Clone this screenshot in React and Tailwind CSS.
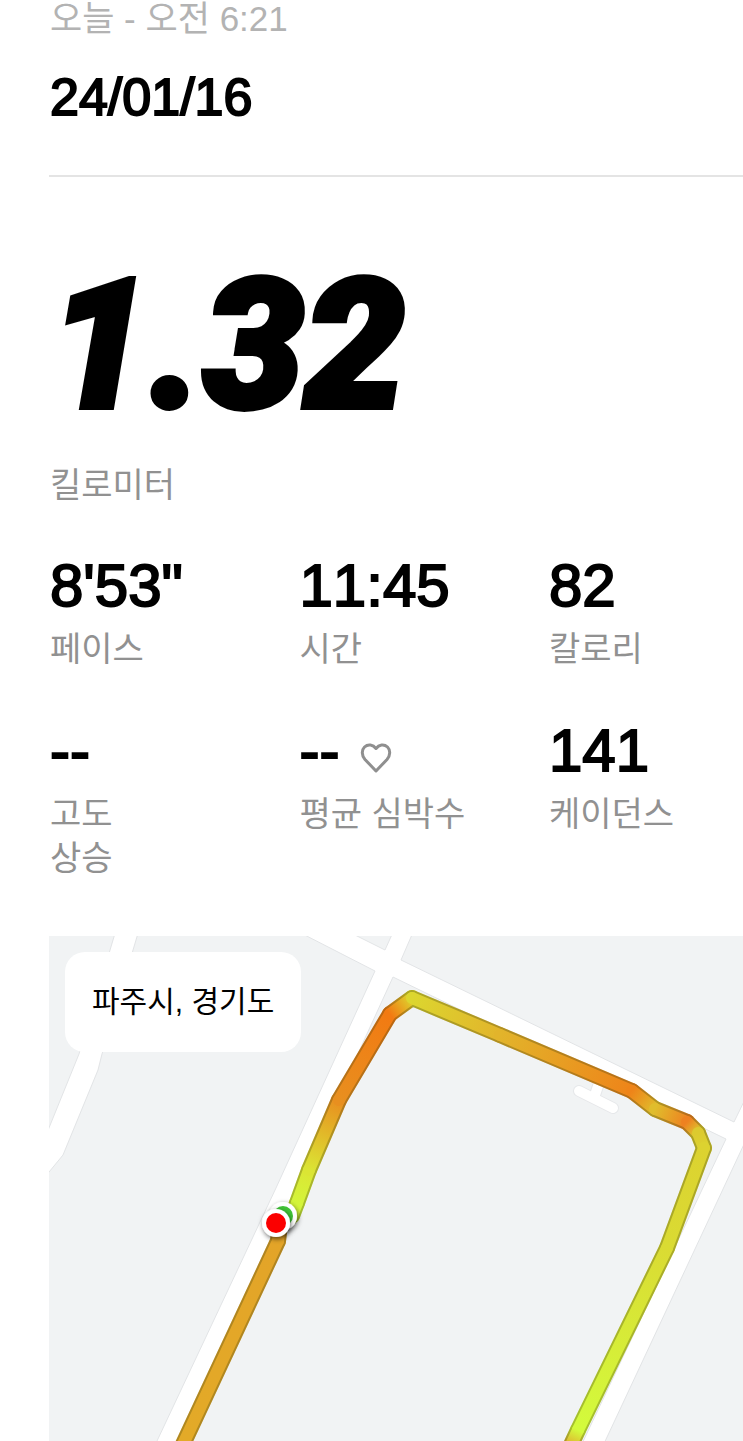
const LABEL = "text-[34px] leading-[44px]";
const FIGURE =
  "text-[60px] leading-[60px] text-black [font-kerning:none] [-webkit-text-stroke:2px_black]";

const route = [
  [292, 1216, "#cdf53c"],
  [297, 1203, "#d4f53a"],
  [309, 1170, "#dbe534"],
  [339, 1100, "#e88f1f"],
  [390, 1014, "#f27a12"],
  [412, 998, "#dcd62f"],
  [500, 1035, "#e2b42b"],
  [632, 1091, "#ee8419"],
  [655, 1109, "#e0bd2c"],
  [687, 1122, "#ee8120"],
  [698, 1133, "#dcca2f"],
  [704, 1148, "#dcd230"],
  [667, 1248, "#dadb33"],
  [578, 1430, "#d3fb3c"],
  [571, 1445, "#dfb52f"],
];

const tail = [
  [280, 1224, "#b97f1c"],
  [278, 1241, "#e3a428"],
  [171, 1470, "#e3ab28"],
];

const toPoints = (list) => list.map(([x, y]) => `${x},${y}`).join(" ");

function Track({ id, points }) {
  const segments = points.slice(1).map((end, i) => [points[i], end]);
  const lines = (width) =>
    segments.map(([a, b], i) => (
      <line
        key={i}
        x1={a[0]}
        y1={a[1]}
        x2={b[0]}
        y2={b[1]}
        stroke={`url(#${id}-${i})`}
        strokeWidth={width}
        strokeLinecap="round"
      />
    ));
  return (
    <g>
      <defs>
        {segments.map(([a, b], i) => (
          <linearGradient
            key={i}
            id={`${id}-${i}`}
            gradientUnits="userSpaceOnUse"
            x1={a[0]}
            y1={a[1]}
            x2={b[0]}
            y2={b[1]}
          >
            <stop offset="0" stopColor={a[2]} />
            <stop offset="1" stopColor={b[2]} />
          </linearGradient>
        ))}
      </defs>
      {lines(16)}
      <polyline
        points={toPoints(points)}
        fill="none"
        stroke="#3c3c10"
        strokeOpacity="0.3"
        strokeWidth="16"
        strokeLinejoin="round"
        strokeLinecap="round"
      />
      {lines(12)}
    </g>
  );
}

function RouteMap() {
  return (
    <svg
      viewBox="49 936 694 505"
      className="block w-full bg-[#f1f3f4]"
      role="img"
      aria-label="러닝 경로 지도"
    >
      <defs>
        <filter id="pin" x="-50%" y="-50%" width="200%" height="200%">
          <feDropShadow dx="1" dy="2" stdDeviation="2.5" floodColor="#000" floodOpacity="0.6" />
        </filter>
      </defs>
      <g fill="#fff" stroke="#e2e4e6" strokeWidth="1">
        <path d="M116 930 L79 1054 L40 1150 V1183 L63 1155 L98 1070 L102 1054 L139 930Z" />
        <path d="M295 930 L375 971 L276 1188 L157 1441 L150 1460 H172 L393 977 L726 1139 L579 1450 H601 L760 1110 V1085 H752 L734 1122 L401 960 L414 930 H394 L385 950 L345 930Z" />
      </g>
      <g fill="none" strokeLinecap="round">
        <path d="M579 1091 L613 1108 M600 1080 L594 1098" stroke="#e6e8ea" strokeWidth="12" />
        <path d="M579 1091 L613 1108 M600 1080 L594 1098" stroke="#fff" strokeWidth="10" />
      </g>
      <Track id="tail" points={tail} />
      <Track id="route" points={route} />
      <g filter="url(#pin)">
        <circle cx="283" cy="1216" r="14" fill="#fff" />
      </g>
      <circle cx="283" cy="1216" r="10" fill="#3fc236" />
      <g filter="url(#pin)">
        <circle cx="276" cy="1223" r="14" fill="#fff" />
      </g>
      <circle cx="276" cy="1223" r="10" fill="#fb0000" />
    </svg>
  );
}

function Heart() {
  return (
    <svg viewBox="0 0 34 34" className="mb-[6px] ml-5 size-[34px]" fill="none" aria-hidden="true">
      <path
        d="M17 30 L6 18.500 C2.500 14.500 2.500 9 5.500 6 C9 2.800 14 3.500 17 7.500 C20 3.500 25 2.800 28.500 6 C31.500 9 31.500 14.500 28 18.500 Z"
        stroke="#8f8f8f"
        strokeWidth="3"
        strokeLinejoin="round"
      />
    </svg>
  );
}

function Stat({ value, icon, children }) {
  return (
    <div className="flex flex-col-reverse justify-end gap-[11px]">
      <dt className={`${LABEL} text-[#919191]`}>{children}</dt>
      <dd className={`${FIGURE} flex items-end`}>
        {value}
        {icon}
      </dd>
    </div>
  );
}

export default function App() {
  return (
    <main className="overflow-hidden bg-white pl-[49px] font-['Liberation_Sans','Noto_Sans_CJK_KR',sans-serif]">
      <header className="border-b-2 border-[#e4e4e4] pb-[52px] pl-px">
        <p className="text-[35px] leading-[38px] text-[#b3b3b3]">오늘 - 오전 6:21</p>
        <h1 className="mt-[33px] text-[52px] leading-[52px] font-normal text-black [font-kerning:none] [-webkit-text-stroke:2px_black]">
          24/01/16
        </h1>
      </header>

      <section className="mt-[79px]">
        <p className="font-['Roboto',sans-serif] text-[180px] leading-[180px] font-black text-black italic [-webkit-text-stroke:6px_black]">
          1.32
        </p>
        <p className={`${LABEL} mt-[27px] pl-px text-[#919191]`}>킬로미터</p>
      </section>

      <dl className="mt-[49px] grid grid-cols-[36%_36%_28%] gap-y-[50px] pl-px">
        <Stat value={"8'53\""}>페이스</Stat>
        <Stat value="11:45">시간</Stat>
        <Stat value="82">칼로리</Stat>
        <Stat value="--">
          고도
          <br />
          상승
        </Stat>
        <Stat value="--" icon={<Heart />}>
          평균 심박수
        </Stat>
        <Stat value="141">케이던스</Stat>
      </dl>

      <section className="relative mt-14">
        <RouteMap />
        <p className="absolute top-4 left-4 rounded-[20px] bg-white px-[27px] py-7 text-[30px] leading-[44px] text-black">
          파주시, 경기도
        </p>
      </section>
    </main>
  );
}
